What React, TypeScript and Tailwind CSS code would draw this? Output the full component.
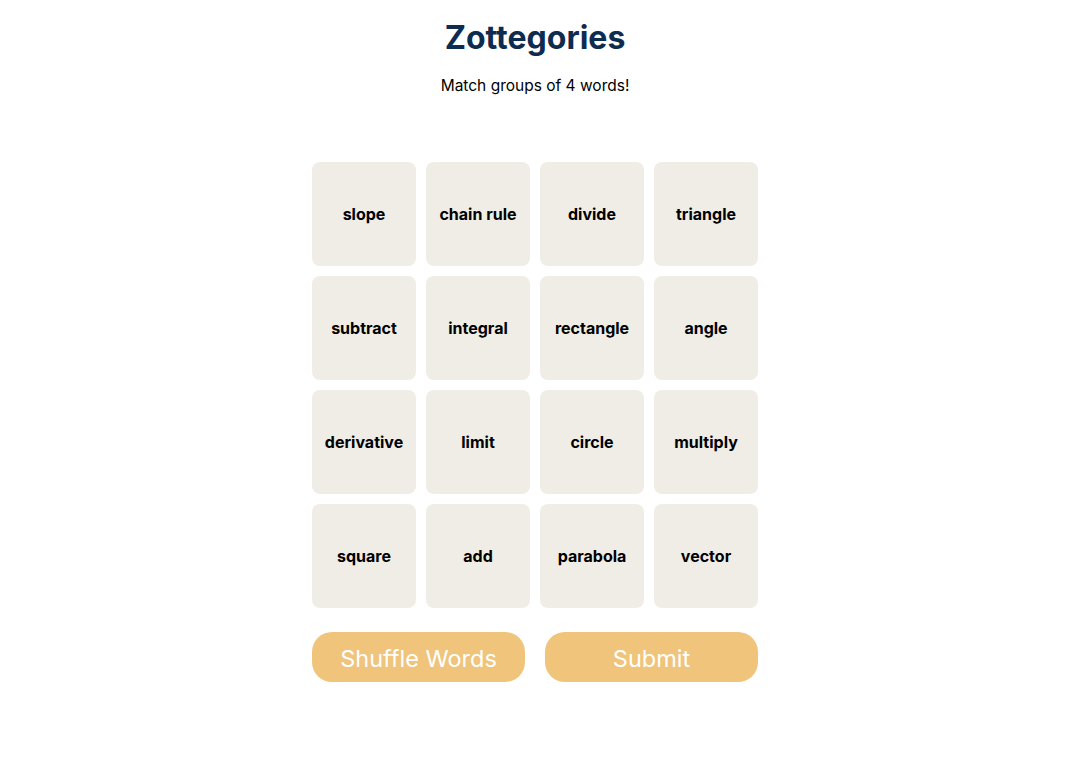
import React from 'react';

const words = [
  'slope', 'chain rule', 'divide', 'triangle',
  'subtract', 'integral', 'rectangle', 'angle',
  'derivative', 'limit', 'circle', 'multiply',
  'square', 'add', 'parabola', 'vector',
];

const App = () => {
  return (
    <div className="w-[1070px] bg-white font-['Inter',sans-serif] text-black">
      <div className="flex flex-col items-center pt-[18px]">
        <h1 className="text-[32px] leading-[40px] font-bold text-[#0e2b50]">Zottegories</h1>
        <p className="mt-[16px] text-[15.5px] leading-6">Match groups of 4 words!</p>

        {/* Word grid */}
        <div className="mt-[64px] grid grid-cols-4 gap-[10px]">
          {words.map((w) => (
            <button
              key={w}
              className="w-[104px] h-[104px] rounded-lg bg-[#efede6] flex items-center justify-center text-base font-bold"
            >
              {w}
            </button>
          ))}
        </div>

        {/* Controls */}
        <div className="mt-6 flex gap-5">
          <button className="w-[213px] h-[50px] rounded-[20px] bg-[#f0c47a] text-white text-[23.5px] pt-[3px]">
            Shuffle Words
          </button>
          <button className="w-[213px] h-[50px] rounded-[20px] bg-[#f0c47a] text-white text-[23.5px] pt-[3px]">
            Submit
          </button>
        </div>
      </div>
    </div>
  );
};

export default App;
